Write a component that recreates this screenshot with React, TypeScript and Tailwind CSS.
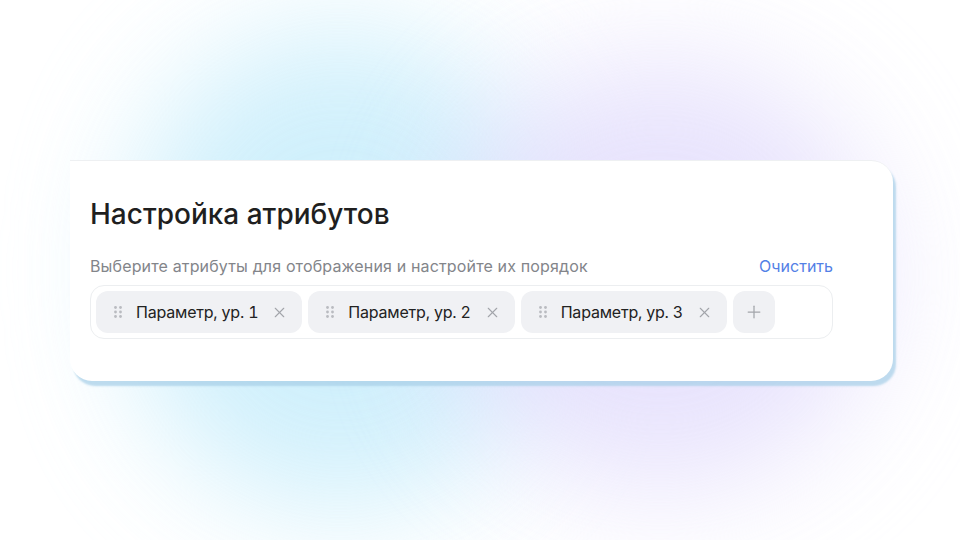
import React from 'react'
import { X, Plus } from 'lucide-react'

// Атрибуты по умолчанию
const ATTRS = ['Параметр, ур. 1', 'Параметр, ур. 2', 'Параметр, ур. 3']

const DragDots: React.FC = () => (
  <svg width="8" height="12" viewBox="0 0 8 12" className="shrink-0">
    {[0, 1, 2].map((r) =>
      [0, 1].map((c) => (
        <circle key={`${r}-${c}`} cx={1.5 + c * 5} cy={1.5 + r * 4.5} r="1.4" fill="#b9bbc0" />
      ))
    )}
  </svg>
)

const Chip: React.FC<{ label: string }> = ({ label }) => (
  <div className="flex items-center h-[42px] pl-[18px] pr-[14px] rounded-[12px] bg-[#f0f1f4]">
    <DragDots />
    <span className="ml-[14px] text-[16px] text-[#222] tracking-[-0.2px] tabular-nums">{label}</span>
    <X className="ml-[13px] w-[17px] h-[17px] text-[#a3a5aa]" strokeWidth={1.6} />
  </div>
)

export default function App() {
  return (
    <div
      className="relative w-[960px] h-[540px] overflow-hidden bg-white"
      style={{ fontFamily: 'Inter, "Noto Sans", sans-serif' }}
    >
      {/* фоновое свечение */}
      <div className="absolute left-[130px] top-[30px] w-[420px] h-[480px] rounded-full bg-[#c4ecfb] blur-[60px] opacity-80" />
      <div className="absolute left-[440px] top-[60px] w-[440px] h-[430px] rounded-full bg-[#e2dcfc] blur-[60px] opacity-80" />

      <div className="relative pt-[160px] pl-[70px]">
        <div className="w-[823px] h-[221px] bg-white rounded-[22px] rounded-tl-none border-t border-[#eef0f2] shadow-[3px_5px_2px_0_rgba(170,208,232,0.75)] pl-5 pr-[60px] pt-[36px]">
          <h1 className="text-[28px] leading-[34px] font-medium text-[#1f1f1f] tracking-[0px]">
            Настройка атрибутов
          </h1>

          <div className="mt-[25px] flex items-center justify-between">
            <span className="text-[16px] leading-[20px] text-[#83858a] tracking-[0.15px]">
              Выберите атрибуты для отображения и настройте их порядок
            </span>
            <span className="text-[16px] leading-[20px] text-[#5380e6]">Очистить</span>
          </div>

          <div className="mt-[9px] h-[54px] rounded-[14px] border border-[#eceef0] p-[5px] flex items-center gap-[6px]">
            {ATTRS.map((a) => (
              <Chip key={a} label={a} />
            ))}
            <div className="w-[42px] h-[42px] rounded-[12px] bg-[#f0f1f4] flex items-center justify-center">
              <Plus className="w-[20px] h-[20px] text-[#a3a5aa]" strokeWidth={1.5} />
            </div>
          </div>
        </div>
      </div>
    </div>
  )
}
